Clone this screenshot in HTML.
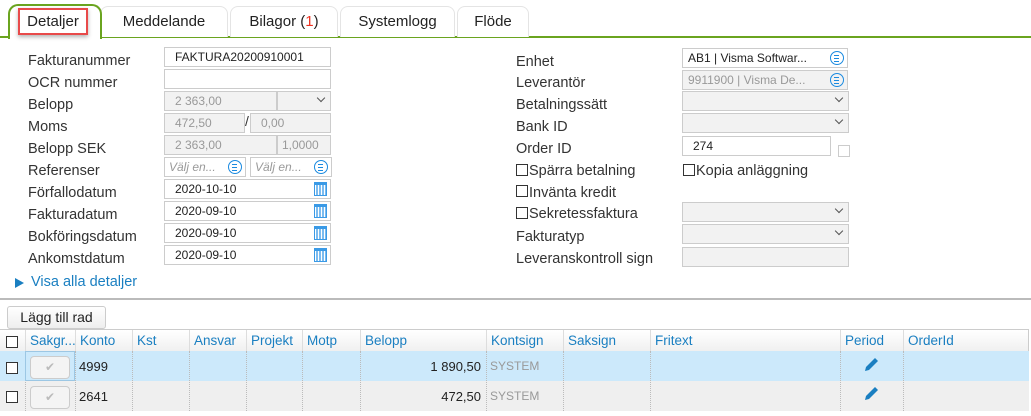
<!DOCTYPE html>
<html><head><meta charset="utf-8"><style>
*{box-sizing:border-box;margin:0;padding:0}
body{width:1031px;height:416px;background:#fff;font-family:"Liberation Sans",sans-serif;font-size:14px;color:#333;position:relative;overflow:hidden}
.a{position:absolute}
.tab{position:absolute;top:6px;height:31px;border:1px solid #e4e4e4;border-bottom:none;border-radius:8px 8px 0 0;background:#fff;font-size:15px;color:#222;text-align:center;line-height:30px}
.lbl{position:absolute;font-size:14.5px;color:#333;line-height:20px}
.in{position:absolute;height:20px;border:1px solid #ccc;background:#fff;font-size:12px;line-height:18px;padding-left:10px;color:#222}
.dis{background:#f2f2f2;color:#999}
.chev{position:absolute;right:6px;top:3px;width:6px;height:6px;border-right:1px solid #555;border-bottom:1px solid #555;transform:rotate(45deg)}
.lst{position:absolute;right:3px;top:2px;width:14px;height:14px;border:1.5px solid #1a8ae0;border-radius:50%}
.lst:before{content:"";position:absolute;left:3px;top:3px;width:5px;height:5px;border-top:1px solid #1a8ae0;border-bottom:1px solid #1a8ae0}
.lst:after{content:"";position:absolute;left:3px;top:5.5px;width:5px;border-top:1px solid #1a8ae0}
.cal{position:absolute;right:3px;top:2px;width:13px;height:14px;border:1.5px solid #3a9ae6;border-top-width:3px;background:repeating-linear-gradient(90deg,#fff 0 1px,#7bbcf0 1px 3px)}
.cb{position:absolute;width:12px;height:12px;border:1px solid #333;background:#fff}
.th{position:absolute;top:330px;height:21px;line-height:21px;color:#1a7fc1;font-size:13.5px;padding-left:4px;border-left:1px solid #ddd}
.vl{position:absolute;top:351px;height:60px;border-left:1px dotted #bbb}
</style></head><body>
<div class="a" style="left:0;top:36px;width:1031px;height:2px;background:#6aa41f"></div>
<div class="tab" style="left:100px;width:128px">Meddelande</div>
<div class="tab" style="left:230px;width:108px">Bilagor (<span style="color:#e32">1</span>)</div>
<div class="tab" style="left:340px;width:115px">Systemlogg</div>
<div class="tab" style="left:457px;width:72px">Flöde</div>
<div class="a" style="left:8px;top:4px;width:94px;height:35px;border:2px solid #6aa41f;border-bottom:none;border-radius:10px 10px 0 0;background:#fff"></div>
<div class="a" style="left:18px;top:8px;width:70px;height:27px;border:2px solid #e84a4a;box-shadow:0 2px 4px rgba(0,0,0,.3);font-size:15px;line-height:23px;text-align:center;color:#222">Detaljer</div>

<div class="lbl" style="left:28px;top:51px">Fakturanummer</div>
<div class="lbl" style="left:28px;top:73px">OCR nummer</div>
<div class="lbl" style="left:28px;top:95px">Belopp</div>
<div class="lbl" style="left:28px;top:117px">Moms</div>
<div class="lbl" style="left:28px;top:139px">Belopp SEK</div>
<div class="lbl" style="left:28px;top:161px">Referenser</div>
<div class="lbl" style="left:28px;top:183px">Förfallodatum</div>
<div class="lbl" style="left:28px;top:205px">Fakturadatum</div>
<div class="lbl" style="left:28px;top:227px">Bokföringsdatum</div>
<div class="lbl" style="left:28px;top:249px">Ankomstdatum</div>

<div class="in" style="left:164px;top:47px;width:167px">FAKTURA20200910001</div>
<div class="in" style="left:164px;top:69px;width:167px"></div>
<div class="in dis" style="left:164px;top:91px;width:113px">2 363,00</div>
<div class="in dis" style="left:277px;top:91px;width:54px"><div class="chev"></div></div>
<div class="in dis" style="left:164px;top:113px;width:81px">472,50</div>
<div class="a" style="left:245px;top:113px;font-size:14px">/</div>
<div class="in dis" style="left:250px;top:113px;width:81px">0,00</div>
<div class="in dis" style="left:164px;top:135px;width:113px">2 363,00</div>
<div class="in dis" style="left:277px;top:135px;width:54px;padding-left:4px">1,0000</div>
<div class="in" style="left:164px;top:157px;width:82px;padding-left:4px;color:#999;font-style:italic">Välj en...<div class="lst"></div></div>
<div class="in" style="left:250px;top:157px;width:82px;padding-left:4px;color:#999;font-style:italic">Välj en...<div class="lst"></div></div>
<div class="in" style="left:164px;top:179px;width:167px">2020-10-10<div class="cal"></div></div>
<div class="in" style="left:164px;top:201px;width:167px">2020-09-10<div class="cal"></div></div>
<div class="in" style="left:164px;top:223px;width:167px">2020-09-10<div class="cal"></div></div>
<div class="in" style="left:164px;top:245px;width:167px">2020-09-10<div class="cal"></div></div>

<div class="lbl" style="left:516px;top:52px">Enhet</div>
<div class="lbl" style="left:516px;top:73px">Leverantör</div>
<div class="lbl" style="left:516px;top:95px">Betalningssätt</div>
<div class="lbl" style="left:516px;top:117px">Bank ID</div>
<div class="lbl" style="left:516px;top:139px">Order ID</div>
<div class="cb" style="left:516px;top:164px"></div><div class="lbl" style="left:529px;top:161px">Spärra betalning</div>
<div class="cb" style="left:683px;top:164px"></div><div class="lbl" style="left:696px;top:161px">Kopia anläggning</div>
<div class="cb" style="left:516px;top:185px"></div><div class="lbl" style="left:529px;top:183px">Invänta kredit</div>
<div class="cb" style="left:516px;top:207px"></div><div class="lbl" style="left:529px;top:204px">Sekretessfaktura</div>
<div class="lbl" style="left:516px;top:227px">Fakturatyp</div>
<div class="lbl" style="left:516px;top:249px">Leveranskontroll sign</div>

<div class="in" style="left:682px;top:48px;width:166px;padding-left:5px">AB1 | Visma Softwar...<div class="lst"></div></div>
<div class="in dis" style="left:682px;top:70px;width:166px;padding-left:5px">9911900 | Visma De...<div class="lst"></div></div>
<div class="in dis" style="left:682px;top:91px;width:167px"><div class="chev"></div></div>
<div class="in dis" style="left:682px;top:113px;width:167px"><div class="chev"></div></div>
<div class="in" style="left:682px;top:136px;width:149px">274</div>
<div class="a" style="left:838px;top:145px;width:12px;height:12px;border:1px solid #ccc"></div>
<div class="in dis" style="left:682px;top:202px;width:167px"><div class="chev"></div></div>
<div class="in dis" style="left:682px;top:224px;width:167px"><div class="chev"></div></div>
<div class="in dis" style="left:682px;top:247px;width:167px"></div>

<div class="a" style="left:15px;top:278px;width:0;height:0;border-left:9px solid #1a7fc1;border-top:5px solid transparent;border-bottom:5px solid transparent"></div>
<div class="a" style="left:31px;top:274px;font-size:14.5px;color:#1a7fc1">Visa alla detaljer</div>
<div class="a" style="left:0;top:298px;width:1031px;height:2px;background:#bbb"></div>

<div class="a" style="left:7px;top:306px;width:99px;height:23px;border:1px solid #ccc;border-radius:3px;background:linear-gradient(#fff,#eee);font-size:14px;line-height:21px;text-align:center;color:#222">Lägg till rad</div>

<div class="a" style="left:0;top:329px;width:1029px;height:22px;border-top:1px solid #ccc;border-right:1px solid #ccc;background:linear-gradient(#fff,#f0f0f0)"></div>
<div class="a" style="left:0;top:351px;width:1029px;height:30px;background:#cce9fb"></div>
<div class="a" style="left:0;top:381px;width:1029px;height:30px;background:#efefef"></div>
<div class="cb" style="left:6px;top:336px"></div>
<div class="th" style="left:25px">Sakgr...</div>
<div class="th" style="left:75px">Konto</div>
<div class="th" style="left:132px">Kst</div>
<div class="th" style="left:189px">Ansvar</div>
<div class="th" style="left:246px">Projekt</div>
<div class="th" style="left:302px">Motp</div>
<div class="th" style="left:360px">Belopp</div>
<div class="th" style="left:486px">Kontsign</div>
<div class="th" style="left:563px">Saksign</div>
<div class="th" style="left:650px">Fritext</div>
<div class="th" style="left:840px">Period</div>
<div class="th" style="left:903px">OrderId</div>
<div class="vl" style="left:25px"></div><div class="vl" style="left:75px"></div><div class="vl" style="left:132px"></div><div class="vl" style="left:189px"></div><div class="vl" style="left:246px"></div><div class="vl" style="left:302px"></div><div class="vl" style="left:360px"></div><div class="vl" style="left:486px"></div><div class="vl" style="left:563px"></div><div class="vl" style="left:650px"></div><div class="vl" style="left:840px"></div><div class="vl" style="left:903px"></div>
<div class="a" style="left:25px;top:351px;width:50px;height:30px;border:1px solid #9cc7e4"></div>

<div class="cb" style="left:6px;top:362px"></div>
<div class="a" style="left:30px;top:356px;width:40px;height:23px;border:1px solid #ccc;border-radius:4px;background:#f4f4f4;color:#bbb;text-align:center;font-size:12px;line-height:21px">✔</div>
<div class="a" style="left:79px;top:359px;font-size:13px;color:#222">4999</div>
<div class="a" style="left:360px;top:359px;width:121px;text-align:right;font-size:13px;color:#222">1 890,50</div>
<div class="a" style="left:490px;top:359px;font-size:12px;color:#999">SYSTEM</div>
<svg class="a" style="left:862px;top:356px" width="18" height="18" viewBox="0 0 18 18"><path d="M3 15 L4 11 L13 2 L16 5 L7 14 Z" fill="#1a7fc1"/></svg>

<div class="cb" style="left:6px;top:391px"></div>
<div class="a" style="left:30px;top:386px;width:40px;height:23px;border:1px solid #ccc;border-radius:4px;background:#f4f4f4;color:#bbb;text-align:center;font-size:12px;line-height:21px">✔</div>
<div class="a" style="left:79px;top:389px;font-size:13px;color:#222">2641</div>
<div class="a" style="left:360px;top:389px;width:121px;text-align:right;font-size:13px;color:#222">472,50</div>
<div class="a" style="left:490px;top:389px;font-size:12px;color:#999">SYSTEM</div>
<svg class="a" style="left:862px;top:385px" width="18" height="18" viewBox="0 0 18 18"><path d="M3 15 L4 11 L13 2 L16 5 L7 14 Z" fill="#1a7fc1"/></svg>
</body></html>
